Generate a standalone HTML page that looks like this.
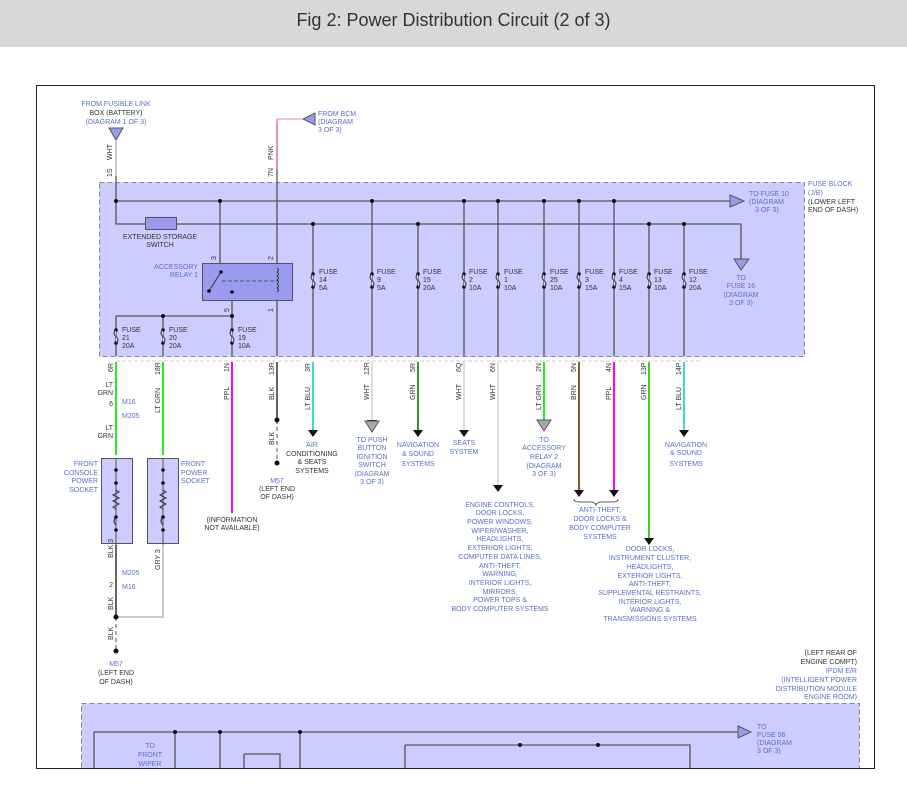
<!DOCTYPE html>
<html><head><meta charset="utf-8"><style>
html,body{margin:0;padding:0;background:#fff;width:907px;height:789px;overflow:hidden}
.hdr{position:absolute;left:0;top:0;width:907px;height:47px;background:#d8d8d8;font:18px "Liberation Sans",sans-serif;color:#333;text-align:center;line-height:40px}
svg{position:absolute;left:0;top:0}
text{font-family:"Liberation Sans",sans-serif;font-size:7px}
.b{fill:#5a70c4}.k{fill:#333}
</style></head><body>
<div class="hdr">Fig 2: Power Distribution Circuit (2 of 3)</div>
<svg width="907" height="789" viewBox="0 0 907 789">
<defs><g id="fz"><circle cx="0" cy="0" r="1.8" fill="#111"/><circle cx="0" cy="13" r="1.8" fill="#111"/><path d="M0 0q-4 3 0 6.5q4 3.5 0 6.5" stroke="#333" fill="#ccccff"/></g></defs>
<!-- fuse block -->
<rect x="99.5" y="182.5" width="705" height="174" fill="#ccccff" stroke="#888" stroke-dasharray="5,3"/>
<rect x="81.5" y="703.5" width="778" height="70" fill="#ccccff" stroke="#888" stroke-dasharray="5,3"/>
<g stroke="#555" stroke-width="1.3" fill="none">
<path d="M116 201H730M116 201V224H741V262"/>
<path d="M220 201V263M277 125V263M277 301V356M232 301V316M116 316H232M116 316V356M163 316V356M232 316V356"/>
<path d="M313 224V356M372 201V356M418 224V356M464 201V356M498 201V356M544 201V356M579 201V356M614 201V356M649 224V356M684 224V356"/>
<path d="M116 140V201"/>
<path d="M94 732H745M94 732V789M175 732V789M220 732V789M300 732V789M405 745H690V789M405 745V789M244 754H280V789M244 754V789"/>
</g>
<g fill="#111">
<circle cx="116" cy="201" r="2"/><circle cx="220" cy="201" r="2"/><circle cx="372" cy="201" r="2"/><circle cx="464" cy="201" r="2"/><circle cx="498" cy="201" r="2"/><circle cx="544" cy="201" r="2"/><circle cx="579" cy="201" r="2"/><circle cx="614" cy="201" r="2"/>
<circle cx="313" cy="224" r="2"/><circle cx="418" cy="224" r="2"/><circle cx="649" cy="224" r="2"/><circle cx="684" cy="224" r="2"/>
<circle cx="163" cy="316" r="2"/><circle cx="232" cy="316" r="2"/>
<circle cx="175" cy="732" r="2"/><circle cx="220" cy="732" r="2"/><circle cx="300" cy="732" r="2"/><circle cx="520" cy="745" r="2"/><circle cx="598" cy="745" r="2"/>
</g>
<use href="#fz" x="313" y="274"/><use href="#fz" x="372" y="274"/><use href="#fz" x="418" y="274"/><use href="#fz" x="464" y="274"/><use href="#fz" x="498" y="274"/><use href="#fz" x="544" y="274"/><use href="#fz" x="579" y="274"/><use href="#fz" x="614" y="274"/><use href="#fz" x="649" y="274"/><use href="#fz" x="684" y="274"/>
<use href="#fz" x="116" y="330"/><use href="#fz" x="163" y="330"/><use href="#fz" x="232" y="330"/>
<rect x="145.5" y="217.5" width="31" height="12" fill="#9a9aee" stroke="#555"/>
<text x="160" y="239" class="k" text-anchor="middle">EXTENDED STORAGE</text>
<text x="160" y="247" class="k" text-anchor="middle">SWITCH</text>
<rect x="202.5" y="263.5" width="90" height="37" fill="#9a9aee" stroke="#555"/>
<path d="M222 281H277" stroke="#555" stroke-dasharray="4,2" fill="none"/>
<path d="M209 291L221 272" stroke="#333" fill="none"/>
<circle cx="209" cy="291" r="1.8" fill="#111"/><circle cx="221" cy="272" r="1.8" fill="#111"/><circle cx="232" cy="292" r="1.8" fill="#111"/>
<path d="M277 268q3 2 0 4q3 2 0 4q3 2 0 4q3 2 0 4q3 2 0 4q3 2 0 4" stroke="#333" fill="none"/>
<text x="198" y="269" class="b" text-anchor="end">ACCESSORY</text>
<text x="198" y="277" class="b" text-anchor="end">RELAY 1</text>
<text x="216" y="260" class="k" transform="rotate(-90 216 260)">3</text>
<text x="273" y="260" class="k" transform="rotate(-90 273 260)">2</text>
<text x="229" y="312" class="k" transform="rotate(-90 229 312)">5</text>
<text x="273" y="312" class="k" transform="rotate(-90 273 312)">1</text>
<g class="k">
<text x="319" y="274">FUSE</text><text x="319" y="282">14</text><text x="319" y="290">5A</text>
<text x="377" y="274">FUSE</text><text x="377" y="282">9</text><text x="377" y="290">5A</text>
<text x="423" y="274">FUSE</text><text x="423" y="282">15</text><text x="423" y="290">20A</text>
<text x="469" y="274">FUSE</text><text x="469" y="282">2</text><text x="469" y="290">10A</text>
<text x="504" y="274">FUSE</text><text x="504" y="282">1</text><text x="504" y="290">10A</text>
<text x="550" y="274">FUSE</text><text x="550" y="282">25</text><text x="550" y="290">10A</text>
<text x="585" y="274">FUSE</text><text x="585" y="282">3</text><text x="585" y="290">15A</text>
<text x="619" y="274">FUSE</text><text x="619" y="282">4</text><text x="619" y="290">15A</text>
<text x="654" y="274">FUSE</text><text x="654" y="282">13</text><text x="654" y="290">10A</text>
<text x="689" y="274">FUSE</text><text x="689" y="282">12</text><text x="689" y="290">20A</text>
<text x="122" y="332">FUSE</text><text x="122" y="340">21</text><text x="122" y="348">20A</text>
<text x="169" y="332">FUSE</text><text x="169" y="340">20</text><text x="169" y="348">20A</text>
<text x="238" y="332">FUSE</text><text x="238" y="340">19</text><text x="238" y="348">10A</text>
</g>
<path d="M730 195L744 201L730 207Z" fill="#9a9aee" stroke="#555"/>
<path d="M734 259H749L741 270Z" fill="#9a9aee" stroke="#555"/>
<path d="M109 128H123L116 140Z" fill="#9a9aee" stroke="#555"/>
<path d="M315 113L315 125L303 119Z" fill="#9a9aee" stroke="#555"/>
<path d="M277 119H303" stroke="#f08090" fill="none"/>
<path d="M277 119V170" stroke="#f08090" stroke-width="1.5" fill="none"/>
<path d="M116 140V176" stroke="#ccc" stroke-width="1.5"/>
<path d="M738 726L751 732L738 738Z" fill="#9a9aee" stroke="#555"/>
<g class="b">
<text x="749" y="196">TO FUSE 10</text><text x="749" y="204">(DIAGRAM</text><text x="755" y="212">3 OF 3)</text>
<text x="808" y="186">FUSE BLOCK</text><text x="808" y="195">(J/B)</text>
<text x="741" y="280" text-anchor="middle">TO</text><text x="741" y="288" text-anchor="middle">FUSE 16</text><text x="741" y="297" text-anchor="middle">(DIAGRAM</text><text x="741" y="305" text-anchor="middle">3 OF 3)</text>
<text x="116" y="106" text-anchor="middle">FROM FUSIBLE LINK</text><text x="116" y="115" text-anchor="middle" class="k">BOX (BATTERY)</text><text x="116" y="124" text-anchor="middle">(DIAGRAM 1 OF 3)</text>
<text x="318" y="116">FROM BCM</text><text x="318" y="124">(DIAGRAM</text><text x="318" y="132">3 OF 3)</text>
<text x="757" y="729">TO</text><text x="757" y="737">FUSE 56</text><text x="757" y="745">(DIAGRAM</text><text x="757" y="753">3 OF 3)</text>
<text x="150" y="748" text-anchor="middle">TO</text><text x="150" y="757" text-anchor="middle">FRONT</text><text x="150" y="766" text-anchor="middle">WIPER</text>
</g>
<g class="k"><text x="808" y="204">(LOWER LEFT</text><text x="808" y="212">END OF DASH)</text>
<text x="857" y="655" text-anchor="end">(LEFT REAR OF</text><text x="857" y="664" text-anchor="end">ENGINE COMPT)</text></g>
<g class="b"><text x="857" y="673" text-anchor="end">IPDM E/R</text><text x="857" y="682" text-anchor="end">(INTELLIGENT POWER</text><text x="857" y="691" text-anchor="end">DISTRIBUTION MODULE</text><text x="857" y="699" text-anchor="end">ENGINE ROOM)</text></g>
<text x="112" y="160" class="k" transform="rotate(-90 112 160)">WHT</text>
<text x="112" y="177" class="k" transform="rotate(-90 112 177)">1S</text>
<text x="273" y="160" class="k" transform="rotate(-90 273 160)">PNK</text>
<text x="273" y="177" class="k" transform="rotate(-90 273 177)">7N</text>
<path d="M116 361H300M330 361H700" stroke="#ccc" stroke-dasharray="4,2"/>
<g stroke-width="2" fill="none">
<path d="M116 362V455" stroke="#22ee22"/>
<path d="M163 362V455" stroke="#22ee22"/>
<path d="M232 362V513" stroke="#ff00ff"/>
<path d="M277 362V420" stroke="#666"/>
<path d="M313 362V430" stroke="#33dddd"/>
<path d="M372 362V420" stroke="#ddd"/>
<path d="M418 362V430" stroke="#339933"/>
<path d="M464 362V430" stroke="#ddd"/>
<path d="M498 362V485" stroke="#ddd"/>
<path d="M544 362V420" stroke="#22ee22"/>
<path d="M579 362V490" stroke="#806020"/>
<path d="M614 362V490" stroke="#ff00ff"/>
<path d="M649 362V538" stroke="#44cc22"/>
<path d="M684 362V430" stroke="#33dddd"/>
<path d="M116 545V617" stroke="#666"/>
<path d="M163 545V617H116" stroke="#ccc"/>
</g>
<path d="M277 420V460M116 617V650" stroke="#555" stroke-dasharray="4,3" fill="none"/>
<g fill="#111"><circle cx="277" cy="420" r="2.5"/><circle cx="277" cy="463" r="2.5"/><circle cx="116" cy="617" r="2.5"/><circle cx="116" cy="651" r="2.5"/>
<path d="M308 430h10l-5 7zM367 420h10l-5 7zM413 430h10l-5 7zM459 430h10l-5 7zM493 485h10l-5 7zM574 490h10l-5 7zM609 490h10l-5 7zM644 538h10l-5 7zM679 430h10l-5 7z"/></g>
<path d="M365 421h14l-7 11z" fill="#aaa" stroke="#555"/>
<path d="M537 420h14l-7 11z" fill="#aaa" stroke="#555"/>
<path d="M574 499q0 3 5 3h11q5 0 6 3q1-3 6-3h11q5 0 5-3" stroke="#555" fill="none"/>
<rect x="101.5" y="458.5" width="31" height="85" fill="#ccccff" stroke="#555"/>
<rect x="147.5" y="458.5" width="31" height="85" fill="#ccccff" stroke="#555"/>
<path d="M116 458V545M163 458V545" stroke="#555" fill="none"/>
<g stroke="#333" fill="none"><path d="M116 490l3 2-6 3 6 3-6 3 6 3-6 3 3 2M163 490l3 2-6 3 6 3-6 3 6 3-6 3 3 2M116 517q-4 4 0 8M163 517q-4 4 0 8"/></g>
<g fill="#111"><circle cx="116" cy="470" r="1.8"/><circle cx="116" cy="483" r="1.8"/><circle cx="116" cy="517" r="1.8"/><circle cx="116" cy="530" r="1.8"/><circle cx="163" cy="470" r="1.8"/><circle cx="163" cy="483" r="1.8"/><circle cx="163" cy="517" r="1.8"/><circle cx="163" cy="530" r="1.8"/></g>
<g class="b">
<text x="98" y="466" text-anchor="end">FRONT</text><text x="98" y="475" text-anchor="end">CONSOLE</text><text x="98" y="483" text-anchor="end">POWER</text><text x="98" y="492" text-anchor="end">SOCKET</text>
<text x="181" y="466">FRONT</text><text x="181" y="475">POWER</text><text x="181" y="483">SOCKET</text>
<text x="312" y="447" text-anchor="middle">AIR</text>
<text x="372" y="442" text-anchor="middle">TO PUSH</text><text x="372" y="450" text-anchor="middle">BUTTON</text><text x="372" y="459" text-anchor="middle">IGNITION</text><text x="372" y="467" text-anchor="middle">SWITCH</text><text x="372" y="476" text-anchor="middle">(DIAGRAM</text><text x="372" y="484" text-anchor="middle">3 OF 3)</text>
<text x="418" y="447" text-anchor="middle">NAVIGATION</text><text x="418" y="456" text-anchor="middle">&amp; SOUND</text><text x="418" y="466" text-anchor="middle">SYSTEMS</text>
<text x="464" y="445" text-anchor="middle">SEATS</text><text x="464" y="454" text-anchor="middle">SYSTEM</text>
<text x="544" y="442" text-anchor="middle">TO</text><text x="544" y="450" text-anchor="middle">ACCESSORY</text><text x="544" y="459" text-anchor="middle">RELAY 2</text><text x="544" y="468" text-anchor="middle">(DIAGRAM</text><text x="544" y="476" text-anchor="middle">3 OF 3)</text>
<text x="686" y="447" text-anchor="middle">NAVIGATION</text><text x="686" y="455" text-anchor="middle">&amp; SOUND</text><text x="686" y="466" text-anchor="middle">SYSTEMS</text>
<text x="500" y="507" text-anchor="middle">ENGINE CONTROLS,</text><text x="500" y="515" text-anchor="middle">DOOR LOCKS,</text><text x="500" y="524" text-anchor="middle">POWER WINDOWS,</text><text x="500" y="533" text-anchor="middle">WIPER/WASHER,</text><text x="500" y="541" text-anchor="middle">HEADLIGHTS,</text><text x="500" y="550" text-anchor="middle">EXTERIOR LIGHTS,</text><text x="500" y="559" text-anchor="middle">COMPUTER DATA LINES,</text><text x="500" y="568" text-anchor="middle">ANTI-THEFT,</text><text x="500" y="576" text-anchor="middle">WARNING,</text><text x="500" y="585" text-anchor="middle">INTERIOR LIGHTS,</text><text x="500" y="594" text-anchor="middle">MIRRORS,</text><text x="500" y="602" text-anchor="middle">POWER TOPS &amp;</text><text x="500" y="611" text-anchor="middle">BODY COMPUTER SYSTEMS</text>
<text x="600" y="512" text-anchor="middle">ANTI-THEFT,</text><text x="600" y="521" text-anchor="middle">DOOR LOCKS &amp;</text><text x="600" y="530" text-anchor="middle">BODY COMPUTER</text><text x="600" y="539" text-anchor="middle">SYSTEMS</text>
<text x="650" y="551" text-anchor="middle">DOOR LOCKS,</text><text x="650" y="560" text-anchor="middle">INSTRUMENT CLUSTER,</text><text x="650" y="569" text-anchor="middle">HEADLIGHTS,</text><text x="650" y="578" text-anchor="middle">EXTERIOR LIGHTS,</text><text x="650" y="586" text-anchor="middle">ANTI-THEFT,</text><text x="650" y="595" text-anchor="middle">SUPPLEMENTAL RESTRAINTS,</text><text x="650" y="604" text-anchor="middle">INTERIOR LIGHTS,</text><text x="650" y="612" text-anchor="middle">WARNING &amp;</text><text x="650" y="621" text-anchor="middle">TRANSMISSIONS SYSTEMS</text>
<text x="277" y="483" text-anchor="middle">M57</text><text x="116" y="666" text-anchor="middle">M57</text>
<text x="122" y="404">M16</text><text x="122" y="418">M205</text><text x="122" y="575">M205</text><text x="122" y="589">M16</text>
</g>
<g class="k">
<text x="312" y="456" text-anchor="middle">CONDITIONING</text><text x="312" y="464" text-anchor="middle">&amp; SEATS</text><text x="312" y="473" text-anchor="middle">SYSTEMS</text>
<text x="277" y="491" text-anchor="middle">(LEFT END</text><text x="277" y="499" text-anchor="middle">OF DASH)</text>
<text x="116" y="675" text-anchor="middle">(LEFT END</text><text x="116" y="684" text-anchor="middle">OF DASH)</text>
<text x="232" y="522" text-anchor="middle">(INFORMATION</text><text x="232" y="530" text-anchor="middle">NOT AVAILABLE)</text>
<text x="113" y="387" text-anchor="end">LT</text><text x="113" y="395" text-anchor="end">GRN</text><text x="113" y="406" text-anchor="end">6</text>
<text x="113" y="430" text-anchor="end">LT</text><text x="113" y="438" text-anchor="end">GRN</text>
<text x="113" y="587" text-anchor="end">2</text>
</g>
<g class="k">
<text x="113" y="372" transform="rotate(-90 113 372)">6R</text>
<text x="160" y="375" transform="rotate(-90 160 375)">18R</text>
<text x="160" y="413" transform="rotate(-90 160 413)">LT GRN</text>
<text x="229" y="372" transform="rotate(-90 229 372)">1N</text>
<text x="229" y="400" transform="rotate(-90 229 400)">PPL</text>
<text x="274" y="375" transform="rotate(-90 274 375)">13R</text>
<text x="274" y="400" transform="rotate(-90 274 400)">BLK</text>
<text x="274" y="445" transform="rotate(-90 274 445)">BLK</text>
<text x="310" y="372" transform="rotate(-90 310 372)">3R</text>
<text x="310" y="410" transform="rotate(-90 310 410)">LT BLU</text>
<text x="369" y="375" transform="rotate(-90 369 375)">12R</text>
<text x="369" y="400" transform="rotate(-90 369 400)">WHT</text>
<text x="415" y="372" transform="rotate(-90 415 372)">5R</text>
<text x="415" y="400" transform="rotate(-90 415 400)">GRN</text>
<text x="461" y="372" transform="rotate(-90 461 372)">6Q</text>
<text x="461" y="400" transform="rotate(-90 461 400)">WHT</text>
<text x="495" y="372" transform="rotate(-90 495 372)">6N</text>
<text x="495" y="400" transform="rotate(-90 495 400)">WHT</text>
<text x="541" y="372" transform="rotate(-90 541 372)">2N</text>
<text x="541" y="410" transform="rotate(-90 541 410)">LT GRN</text>
<text x="576" y="372" transform="rotate(-90 576 372)">5N</text>
<text x="576" y="400" transform="rotate(-90 576 400)">BRN</text>
<text x="611" y="372" transform="rotate(-90 611 372)">4N</text>
<text x="611" y="400" transform="rotate(-90 611 400)">PPL</text>
<text x="646" y="375" transform="rotate(-90 646 375)">13P</text>
<text x="646" y="400" transform="rotate(-90 646 400)">GRN</text>
<text x="681" y="375" transform="rotate(-90 681 375)">14P</text>
<text x="681" y="410" transform="rotate(-90 681 410)">LT BLU</text>
<text x="113" y="558" transform="rotate(-90 113 558)">BLK 3</text>
<text x="113" y="610" transform="rotate(-90 113 610)">BLK</text>
<text x="113" y="640" transform="rotate(-90 113 640)">BLK</text>
<text x="160" y="570" transform="rotate(-90 160 570)">GRY 3</text>
</g>
<rect x="0" y="769" width="907" height="20" fill="#fff"/>
<rect x="36.5" y="85.5" width="838" height="683" fill="none" stroke="#222" stroke-width="1"/>
</svg>
</body></html>
